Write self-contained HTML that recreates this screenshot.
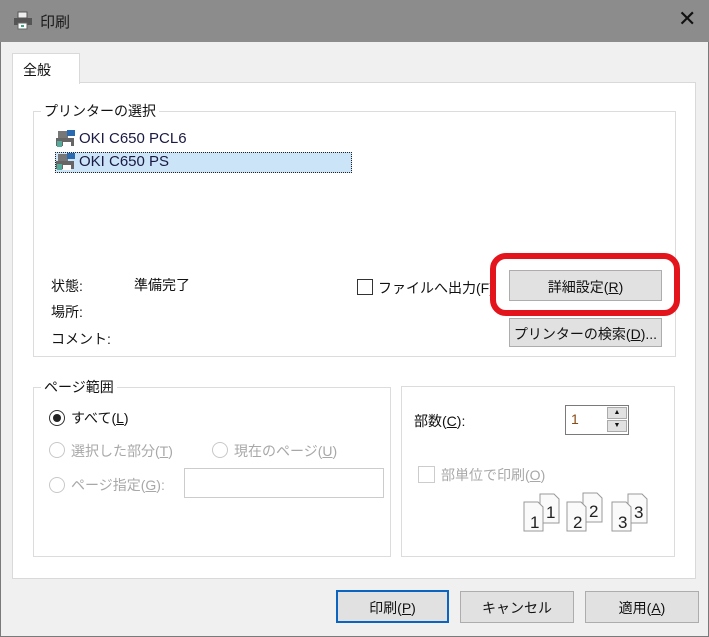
<!DOCTYPE html>
<html><head><meta charset="utf-8"><style>
*{box-sizing:border-box;margin:0;padding:0}
body{width:709px;height:637px;background:#f0f0f0;font-family:"Liberation Sans","Noto Sans CJK JP",sans-serif;font-size:14px;color:#111;position:relative;overflow:hidden}
.a{position:absolute}
.win{left:0;top:0;width:709px;height:637px;border:1px solid #7a7a7a;border-top:none}
.title{left:0;top:0;width:709px;height:42px;background:#8c8c8c}
.panel{left:12px;top:82px;width:684px;height:497px;background:#fff;border:1px solid #d9d9d9}
.tab{left:12px;top:53px;width:68px;height:31px;background:#fff;border:1px solid #d9d9d9;border-bottom:none;padding:6px 0 0 10px}
.grp{border:1px solid #dcdcdc}
.lg{background:#fff;padding:0 3px;font-size:14px}
.btn{background:#e1e1e1;border:1px solid #adadad;text-align:center;font-size:14px}
.dis{color:#a8a8a8}
.radio{width:16px;height:16px;border:1px solid #c8c8c8;border-radius:50%;background:#fff}
u{text-decoration:underline}
</style></head><body>
<div class="a win"></div>
<div class="a title"></div>
<svg class="a" style="left:13px;top:11px" width="20" height="20" viewBox="0 0 20 20"><rect x="5" y="1" width="9" height="6" fill="#eee" stroke="#555"/><rect x="1" y="7" width="18" height="7" fill="#555"/><rect x="5" y="12" width="9" height="6" fill="#fff" stroke="#666"/><rect x="8" y="14" width="3" height="2" fill="#3a8"/></svg>
<div class="a" style="left:40px;top:11px;font-size:15px;color:#1a1a1a">印刷</div>
<div class="a" style="left:678px;top:6px;font-size:22px;color:#111">✕</div>
<div class="a panel"></div>
<div class="a tab">全般</div>

<div class="a grp" style="left:33px;top:111px;width:643px;height:246px"></div>
<div class="a lg" style="left:41px;top:101px">プリンターの選択</div>
<svg class="a" style="left:55px;top:129px" width="22" height="20"><rect x="3" y="2" width="10" height="10" fill="#777"/><rect x="12" y="1" width="8" height="6" fill="#2a6ab0"/><rect x="1" y="9" width="18" height="8" fill="#666"/><rect x="8" y="13" width="8" height="5" fill="#fff"/><rect x="2" y="12" width="5" height="6" fill="#5a9"/></svg>
<div class="a" style="left:79px;top:130px;font-size:15px;color:#1a1a44">OKI C650 PCL6</div>
<div class="a" style="left:55px;top:152px;width:297px;height:21px;background:#cce4f7;border:1px dotted #222"></div>
<svg class="a" style="left:55px;top:152px" width="22" height="20"><rect x="3" y="2" width="10" height="10" fill="#777"/><rect x="12" y="1" width="8" height="6" fill="#2a6ab0"/><rect x="1" y="9" width="18" height="8" fill="#666"/><rect x="8" y="13" width="8" height="5" fill="#fff"/><rect x="2" y="12" width="5" height="6" fill="#5a9"/></svg>
<div class="a" style="left:79px;top:153px;font-size:15px;color:#1a1a44">OKI C650 PS</div>

<div class="a" style="left:51px;top:276px">状態:</div>
<div class="a" style="left:134px;top:275px">準備完了</div>
<div class="a" style="left:51px;top:302px">場所:</div>
<div class="a" style="left:51px;top:329px">コメント:</div>
<div class="a" style="left:357px;top:279px;width:16px;height:16px;border:1px solid #333;background:#fff"></div>
<div class="a" style="left:378px;top:278px">ファイルへ出力(F)</div>
<div class="a btn" style="left:509px;top:270px;width:153px;height:31px;padding-top:6px">詳細設定(<u>R</u>)</div>
<div class="a btn" style="left:509px;top:318px;width:153px;height:29px;padding-top:5px">プリンターの検索(<u>D</u>)...</div>
<div class="a" style="left:490px;top:253px;width:190px;height:63px;border:6px solid #e3141b;border-radius:16px"></div>

<div class="a grp" style="left:33px;top:387px;width:358px;height:170px"></div>
<div class="a lg" style="left:41px;top:377px">ページ範囲</div>
<div class="a radio" style="left:49px;top:410px;border-color:#333"></div>
<div class="a" style="left:53px;top:414px;width:8px;height:8px;border-radius:50%;background:#222"></div>
<div class="a" style="left:71px;top:408px">すべて(<u>L</u>)</div>
<div class="a radio" style="left:49px;top:442px"></div>
<div class="a dis" style="left:71px;top:441px">選択した部分(<u>T</u>)</div>
<div class="a radio" style="left:212px;top:442px"></div>
<div class="a dis" style="left:234px;top:441px">現在のページ(<u>U</u>)</div>
<div class="a radio" style="left:49px;top:477px"></div>
<div class="a dis" style="left:71px;top:475px">ページ指定(<u>G</u>):</div>
<div class="a" style="left:184px;top:468px;width:200px;height:30px;border:1px solid #ccc;background:#fff"></div>

<div class="a grp" style="left:401px;top:386px;width:274px;height:171px"></div>
<div class="a" style="left:414px;top:411px">部数(<u>C</u>):</div>
<div class="a" style="left:565px;top:405px;width:64px;height:30px;border:1px solid #7a7a7a;background:#fff"></div>
<div class="a" style="left:571px;top:411px;color:#8a4a10">1</div>
<div class="a" style="left:607px;top:407px;width:20px;height:12px;background:#e1e1e1;border:1px solid #aaa;font-size:7px;text-align:center;line-height:10px">▲</div>
<div class="a" style="left:607px;top:420px;width:20px;height:12px;background:#e1e1e1;border:1px solid #aaa;font-size:7px;text-align:center;line-height:10px">▼</div>
<div class="a" style="left:418px;top:466px;width:17px;height:17px;border:1px solid #ccc;background:#fff"></div>
<div class="a dis" style="left:441px;top:465px">部単位で印刷(<u>O</u>)</div>
<svg class="a" style="left:520px;top:490px" width="140" height="44">
<g font-family="Liberation Sans" font-size="17" fill="#222">
<path d="M20 4h14l5 5v24h-19z" fill="#fafafa" stroke="#999"/><text x="26" y="28">1</text>
<path d="M4 12h14l5 5v24h-19z" fill="#fafafa" stroke="#999"/><text x="10" y="38">1</text>
<path d="M63 3h14l5 5v24h-19z" fill="#fafafa" stroke="#999"/><text x="69" y="27">2</text>
<path d="M47 12h14l5 5v24h-19z" fill="#fafafa" stroke="#999"/><text x="53" y="38">2</text>
<path d="M108 4h14l5 5v24h-19z" fill="#fafafa" stroke="#999"/><text x="114" y="28">3</text>
<path d="M92 12h14l5 5v24h-19z" fill="#fafafa" stroke="#999"/><text x="98" y="38">3</text>
</g></svg>

<div class="a btn" style="left:336px;top:590px;width:113px;height:33px;border:2px solid #0a64c0;padding-top:6px">印刷(<u>P</u>)</div>
<div class="a btn" style="left:460px;top:591px;width:114px;height:32px;padding-top:6px">キャンセル</div>
<div class="a btn" style="left:585px;top:591px;width:114px;height:32px;padding-top:6px">適用(<u>A</u>)</div>
</body></html>
